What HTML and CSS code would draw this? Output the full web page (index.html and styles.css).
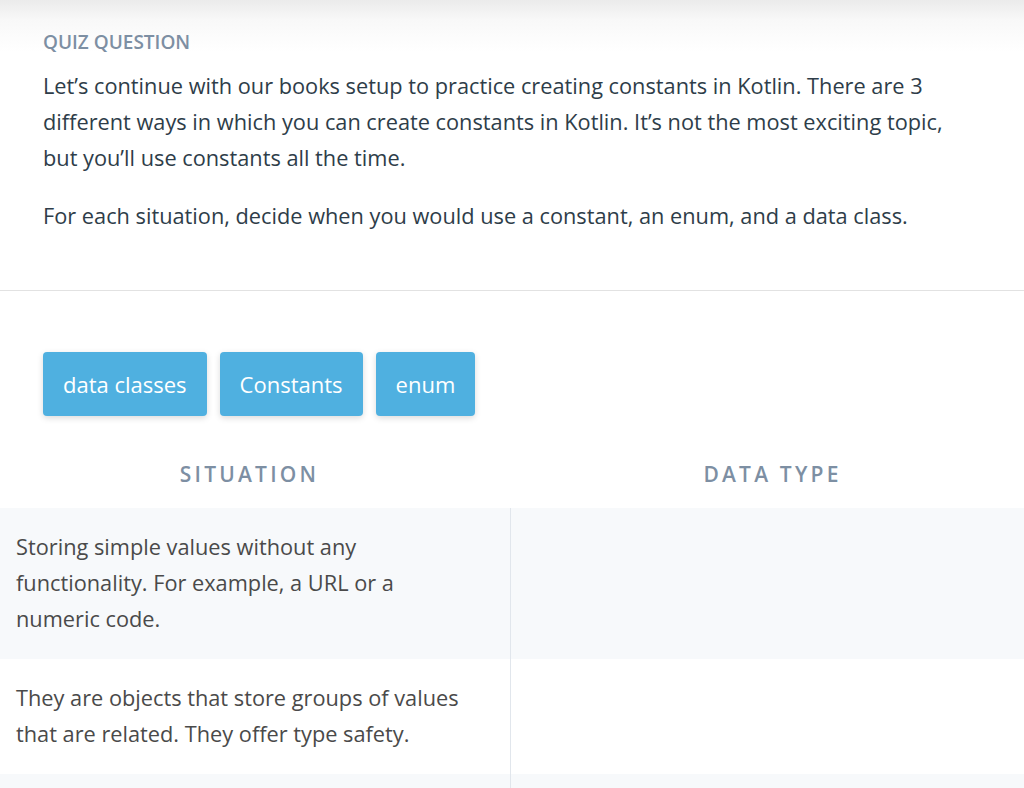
FILE: index.html
```html
<!DOCTYPE html>
<html>
<head>
<meta charset="utf-8">
<link rel="stylesheet" href="styles.css">
</head>
<body>
<section class="question">
  <div class="label">Quiz Question</div>
  <p>Let’s continue with our books setup to practice creating constants in Kotlin. There are 3 different ways in which you can create constants in Kotlin. It’s not the most exciting topic, but you’ll use constants all the time.</p>
  <p class="second">For each situation, decide when you would use a constant, an enum, and a data class.</p>
</section>
<section class="answers">
  <div class="chips">
    <div class="chip">data classes</div>
    <div class="chip">Constants</div>
    <div class="chip">enum</div>
  </div>
  <div class="table">
    <div class="head first">Situation</div>
    <div class="head second">Data Type</div>
    <div class="cell odd"><div class="text">Storing simple values without any functionality. For example, a URL or a numeric code.</div></div>
    <div class="drop odd"></div>
    <div class="cell"><div class="text">They are objects that store groups of values that are related. They offer type safety.</div></div>
    <div class="drop"></div>
    <div class="cell odd"><div class="text">&nbsp;</div></div>
    <div class="drop odd"></div>
  </div>
</section>
</body>
</html>
```
FILE: styles.css
```css
html, body {
  margin: 0;
  padding: 0;
  background: #fff;
  font-family: "Open Sans", "Noto Sans", sans-serif;
}
body {
  height: 788px;
  overflow: hidden;
}
.question {
  background: linear-gradient(#ebebeb 0px, #f8f8f8 20px, #ffffff 52px);
  padding: 30px 43px 56px;
  border-bottom: 1px solid #e2e2e2;
}
.label {
  font-size: 19px;
  line-height: 24px;
  font-weight: 600;
  color: #7d8fa3;
  text-transform: uppercase;
  margin-bottom: 14px;
}
.question p {
  margin: 0;
  font-size: 21.75px;
  line-height: 36px;
  color: #2e3d49;
}
.question p.second {
  margin-top: 22px;
}
.answers {
  padding-top: 61px;
}
.chips {
  display: flex;
  gap: 13px;
  padding-left: 43px;
}
.chip {
  height: 64px;
  display: flex;
  align-items: center;
  padding: 0 20px;
  background: #4fb0e0;
  color: #fff;
  font-size: 22px;
  border-radius: 4px;
  box-shadow: 0 2px 6px rgba(0, 0, 0, 0.15);
}
.table {
  margin-top: 24px;
  display: grid;
  grid-template-columns: 511px 1fr;
}
.head {
  height: 68px;
  display: flex;
  align-items: center;
  justify-content: center;
  font-size: 21px;
  font-weight: 600;
  letter-spacing: 3.2px;
  text-transform: uppercase;
  color: #7d8fa3;
}
.head.first {
  padding-right: 12px;
}
.head.second {
  padding-left: 10px;
}
.cell {
  padding: 21px 31px 22px 16px;
  border-right: 1px solid #e1e6ec;
}
.cell .text {
  font-size: 21.75px;
  line-height: 36px;
  color: #4a4a4a;
}
.odd {
  background: #f7f9fb;
}
```
